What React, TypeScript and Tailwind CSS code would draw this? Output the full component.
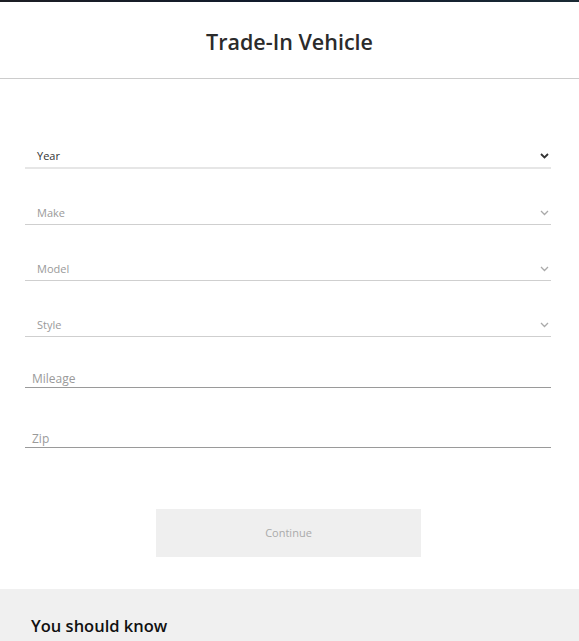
import React from "react";

const Chevron = ({ dark }: { dark?: boolean }) => (
  <svg width="9" height="6" viewBox="0 0 9 6" className="shrink-0">
    <path d="M1 1l3.5 3.5L8 1" fill="none" stroke={dark ? "#333" : "#aaa"} strokeWidth={dark ? 1.8 : 1.3} />
  </svg>
);

const SelectRow = ({ label, active }: { label: string; active?: boolean }) => (
  <div
    className={`flex items-end justify-between h-[56px] pl-[12px] pr-[2px] pb-[4px] ${
      active ? "border-b-2 border-[#e6e6e6]" : "border-b border-[#cfcfcf]"
    }`}
  >
    <span className={`text-[11px] leading-[14px] ${active ? "text-[#333]" : "text-[#9a9a9a]"}`}>{label}</span>
    <span className="mb-[4px]">
      <Chevron dark={active} />
    </span>
  </div>
);

const InputRow = ({ label, mt }: { label: string; mt: string }) => (
  <div className={`${mt} border-b border-[#9a9a9a] pl-[7px] pb-[1px]`}>
    <span className="block text-[12px] leading-[14px] text-[#9a9a9a]">{label}</span>
  </div>
);

export default function App() {
  return (
    <div className="w-[579px] h-[641px] overflow-hidden bg-white" style={{ fontFamily: '"Open Sans", sans-serif' }}>
      <div className="h-[2px] bg-gradient-to-r from-[#1c1e24] via-[#101a2c] to-[#1a2a34]" />
      <div className="h-[77px] flex items-center justify-center border-b border-[#cccccc]">
        <h1 className="text-[21.5px] font-semibold text-[#2b2b2b] mt-[4px]">Trade-In Vehicle</h1>
      </div>
      <div className="pl-[25px] pr-[28px] pt-[34px]">
        <SelectRow label="Year" active />
        <SelectRow label="Make" />
        <SelectRow label="Model" />
        <SelectRow label="Style" />
        <InputRow label="Mileage" mt="mt-[35px]" />
        <InputRow label="Zip" mt="mt-[44px]" />
      </div>
      <div className="flex justify-center mt-[61px] pr-[2px]">
        <div className="w-[265px] h-[48px] bg-[#efefef] flex items-center justify-center text-[11px] text-[#aaaaaa]">
          Continue
        </div>
      </div>
      <div className="mt-[32px] bg-[#f0f0f0] h-[60px] px-[31px] pt-[25px]">
        <h2 className="text-[16.5px] font-semibold text-[#111] leading-[24px]">You should know</h2>
      </div>
    </div>
  );
}
